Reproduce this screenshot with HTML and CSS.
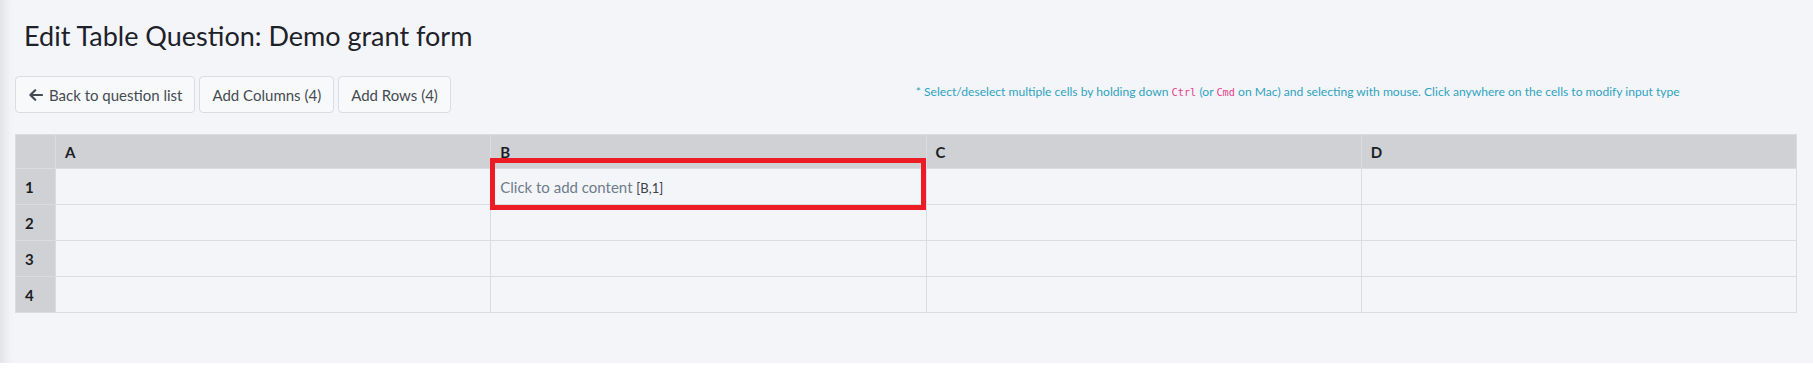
FILE: index.html
```html
<!DOCTYPE html>
<html lang="en">
<head>
    <meta charset="UTF-8">
    <meta name="viewport" content="width=device-width, initial-scale=1.0">
    <title>Edit Table Question</title>
    <link rel="stylesheet" href="styles.css">
</head>
<body>
    <div class="page">
        <h3 class="title">Edit Table Question: Demo grant form</h3>

        <div class="toolbar">
            <div class="btn-group">
                <button type="button" class="btn">
                    <svg class="icon" width="14" height="12" viewBox="0 0 14 12" aria-hidden="true">
                        <path d="M6.2 1.2 L1.4 6 L6.2 10.8 M1.6 6 H13" fill="none" stroke="currentColor" stroke-width="2.2" stroke-linecap="round" stroke-linejoin="round"/>
                    </svg>
                    Back to question list
                </button>
                <button type="button" class="btn">Add Columns (4)</button>
                <button type="button" class="btn">Add Rows (4)</button>
            </div>
            <p class="hint">* Select/deselect multiple cells by holding down <code>Ctrl</code> (or <code>Cmd</code> on Mac) and selecting with mouse. Click anywhere on the cells to modify input type</p>
        </div>

        <table class="grid">
            <colgroup>
                <col class="col-num">
                <col><col><col><col>
            </colgroup>
            <thead>
                <tr>
                    <th></th>
                    <th>A</th>
                    <th>B</th>
                    <th>C</th>
                    <th>D</th>
                </tr>
            </thead>
            <tbody>
                <tr>
                    <th>1</th>
                    <td></td>
                    <td class="selected"><span class="placeholder">Click to add content</span> <span class="ref">[B,1]</span></td>
                    <td></td>
                    <td></td>
                </tr>
                <tr>
                    <th>2</th>
                    <td></td><td></td><td></td><td></td>
                </tr>
                <tr>
                    <th>3</th>
                    <td></td><td></td><td></td><td></td>
                </tr>
                <tr>
                    <th>4</th>
                    <td></td><td></td><td></td><td></td>
                </tr>
            </tbody>
        </table>
    </div>
</body>
</html>
```

FILE: styles.css
```css
body {
    margin: 0;
    padding: 0;
    background: #fff;
    font-family: 'Lato', 'Open Sans', sans-serif;
    color: #212529;
}
.page {
    min-height: 363px;
    box-sizing: border-box;
    padding: 20px 16px 0 15px;
    background: #f4f5f9;
    box-shadow: inset 14px 0 12px -10px rgba(0, 0, 0, 0.09);
}
.title {
    margin: 0 0 24px 9px;
    font-size: 27px;
    font-weight: 400;
    line-height: 1.2;
    color: #1d2129;
}
.toolbar {
    display: flex;
    align-items: flex-start;
    height: 37px;
    margin-bottom: 21px;
}
.btn-group {
    display: flex;
    gap: 4px;
}
.btn {
    display: flex;
    align-items: center;
    gap: 6px;
    height: 37px;
    padding: 0 12px;
    font-family: inherit;
    font-size: 15px;
    color: #454b52;
    background: #f8f9fb;
    border: 1px solid #d9dce0;
    border-radius: 4px;
    cursor: pointer;
}
.btn .icon {
    margin-left: 1px;
}
.hint {
    margin: 8px 0 0 465px;
    font-size: 12.1px;
    color: #2ea3c0;
    white-space: nowrap;
}
.hint code {
    font-family: 'DejaVu Sans Mono', monospace;
    font-size: 10.3px;
    color: #e83e8c;
}
.grid {
    width: 100%;
    table-layout: fixed;
    border-collapse: collapse;
    border: 1px solid #dadce0;
}
.col-num {
    width: 40px;
}
.grid th,
.grid td {
    border: 1px solid #dadce0;
    padding: 0 9px;
    text-align: left;
    font-size: 15px;
}
.grid thead th {
    height: 33px;
    background: #d0d1d5;
    font-weight: 700;
    color: #1b1e24;
}
.grid tbody th {
    width: 40px;
    background: #d0d1d5;
    font-weight: 700;
    color: #1b1e24;
}
.grid tbody td,
.grid tbody th {
    height: 35px;
}
.grid td {
    background: #f4f5f9;
}
.selected {
    position: relative;
}
.selected::after {
    content: "";
    position: absolute;
    top: -11px;
    bottom: -6px;
    left: -1px;
    right: 0;
    border: 5px solid #ed1c24;
    pointer-events: none;
}
.placeholder {
    color: #6e7c8c;
}
.ref {
    font-size: 13px;
    font-weight: 400;
    color: #3a4046;
}
```
